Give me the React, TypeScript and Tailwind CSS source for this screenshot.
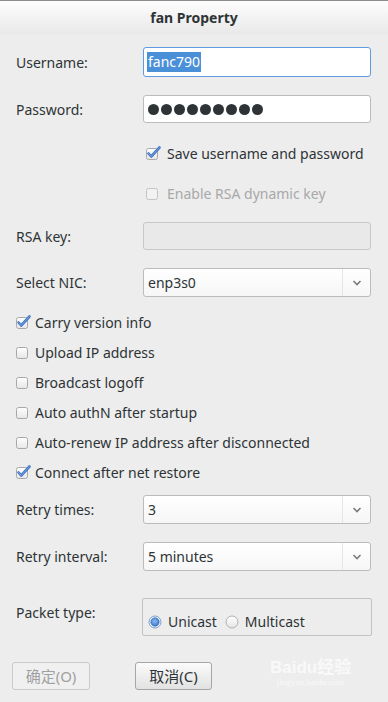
import React from 'react';

const font = { fontFamily: '"Noto Sans", "Noto Sans CJK SC", sans-serif' };

const CheckBox: React.FC<{ checked?: boolean; disabled?: boolean }> = ({ checked, disabled }) => (
  <svg width="16" height="16" viewBox="0 0 16 16" className="shrink-0">
    <defs>
      <linearGradient id="cbg" x1="0" y1="0" x2="0" y2="1">
        <stop offset="0" stopColor="#ffffff" />
        <stop offset="1" stopColor="#e6e6e6" />
      </linearGradient>
    </defs>
    <rect
      x="0.5"
      y="3.5"
      width="11"
      height="11"
      rx="2"
      fill={disabled ? '#f2f2f2' : 'url(#cbg)'}
      stroke={disabled ? '#c4c4c4' : '#a8a8a8'}
    />
    {checked && (
      <path
        d="M2.5 8.5 L5.2 11.5 L13.5 2.5"
        fill="none"
        stroke="#3b73c4"
        strokeWidth="2.6"
        strokeLinecap="round"
        strokeLinejoin="round"
      />
    )}
    {checked && (
      <path
        d="M2.5 8.5 L5.2 11.5 L13.5 2.5"
        fill="none"
        stroke="#8fb4e8"
        strokeWidth="0.8"
        strokeLinecap="round"
        strokeLinejoin="round"
      />
    )}
  </svg>
);

const Radio: React.FC<{ checked?: boolean }> = ({ checked }) => (
  <svg width="14" height="14" viewBox="0 0 14 14" className="shrink-0">
    <defs>
      <radialGradient id="rsel" cx="0.45" cy="0.4" r="0.6">
        <stop offset="0" stopColor="#8cbcf0" />
        <stop offset="1" stopColor="#3a78d0" />
      </radialGradient>
      <linearGradient id="roff" x1="0" y1="0" x2="0" y2="1">
        <stop offset="0" stopColor="#ffffff" />
        <stop offset="1" stopColor="#e4e4e4" />
      </linearGradient>
    </defs>
    <circle cx="7" cy="7" r="6" fill={checked ? '#f4f8fd' : 'url(#roff)'} stroke={checked ? '#7a9ecc' : '#b0b0b0'} />
    {checked && <circle cx="7" cy="7" r="4.2" fill="url(#rsel)" stroke="#2f62b0" strokeWidth="0.6" />}
  </svg>
);

const Chevron = () => (
  <svg width="10" height="6" viewBox="0 0 10 6">
    <path d="M1.5 1 L5 4.5 L8.5 1" fill="none" stroke="#7b7b7b" strokeWidth="1.6" />
  </svg>
);

const Combo: React.FC<{ value: string }> = ({ value }) => (
  <div className="flex h-[29px] w-[228px] rounded-[3px] border border-[#bcbcbc] bg-gradient-to-b from-[#ffffff] to-[#f6f6f6]">
    <div className="flex flex-1 items-center pl-[4px] text-[14px] text-[#2e3436]">{value}</div>
    <div className="flex w-[28px] items-center justify-center border-l border-[#e6e6e6]">
      <Chevron />
    </div>
  </div>
);

const Row: React.FC<{ label: string; labelClass?: string; children: React.ReactNode; className?: string }> = ({
  label,
  labelClass = 'items-center',
  children,
  className = '',
}) => (
  <div className={`flex ${className}`}>
    <div className={`flex w-[127px] text-[14px] text-[#2e3436] ${labelClass}`}>{label}</div>
    {children}
  </div>
);

const options = [
  { label: 'Carry version info', checked: true },
  { label: 'Upload IP address', checked: false },
  { label: 'Broadcast logoff', checked: false },
  { label: 'Auto authN after startup', checked: false },
  { label: 'Auto-renew IP address after disconnected', checked: false },
  { label: 'Connect after net restore', checked: true },
];

export default function App() {
  return (
    <div className="h-[702px] w-[388px] overflow-hidden bg-[#ededed]" style={font}>
      {/* Title bar */}
      <div className="flex h-[34px] items-center justify-center border-t border-[#8c8c8c] bg-gradient-to-b from-[#fdfdfd] to-[#e9e9e9]">
        <span className="text-[14px] font-bold text-[#2e3436]">fan Property</span>
      </div>

      <div className="flex flex-col pl-[16px] pt-[13px]">
        <Row label="Username:">
          <div className="flex h-[30px] w-[228px] items-center rounded-[3px] border border-[#5f9be0] bg-white pl-[3px]">
            <span className="bg-[#4a90d9] px-[1px] text-[14px] leading-[20px] text-white">fanc790</span>
          </div>
        </Row>

        <Row label="Password:" className="mt-[18px]">
          <div className="flex h-[28px] w-[228px] items-center gap-[2px] rounded-[3px] border border-[#bcbcbc] bg-white pl-[4px]">
            {Array.from({ length: 9 }).map((_, i) => (
              <span key={i} className="h-[11px] w-[11px] rounded-full bg-[#2e3436]" />
            ))}
          </div>
        </Row>

        <div className="mt-[20px] flex h-[20px] items-center gap-[5px] pl-[130px]">
          <CheckBox checked />
          <span className="text-[14px] text-[#2e3436]">Save username and password</span>
        </div>

        <div className="mt-[20px] flex h-[20px] items-center gap-[5px] pl-[130px]">
          <CheckBox disabled />
          <span className="text-[14px] text-[#a8a8a8]">Enable RSA dynamic key</span>
        </div>

        <Row label="RSA key:" className="mt-[19px]">
          <div className="h-[28px] w-[228px] rounded-[3px] border border-[#c8c8c8] bg-[#e9e9e9]" />
        </Row>

        <Row label="Select NIC:" className="mt-[18px]">
          <Combo value="enp3s0" />
        </Row>

        <div className="mt-[10px] flex flex-col">
          {options.map((o) => (
            <div key={o.label} className="flex h-[30px] items-center gap-[3px]">
              <CheckBox checked={o.checked} />
              <span className="text-[14px] text-[#2e3436]">{o.label}</span>
            </div>
          ))}
        </div>

        <Row label="Retry times:" className="mt-[8px]">
          <Combo value="3" />
        </Row>

        <Row label="Retry interval:" className="mt-[18px]">
          <Combo value="5 minutes" />
        </Row>

        <Row label="Packet type:" labelClass="items-start pt-[4px]" className="mt-[27px]">
          <div className="flex h-[38px] w-[230px] -ml-[1px] items-end gap-[8px] rounded-[2px] border border-[#c2c2c2] pb-[3px] pl-[5px]">
            <div className="flex items-center gap-[6px]">
              <Radio checked />
              <span className="text-[14px] text-[#2e3436]">Unicast</span>
            </div>
            <div className="flex items-center gap-[6px]">
              <Radio />
              <span className="text-[14px] text-[#2e3436]">Multicast</span>
            </div>
          </div>
        </Row>

        <div className="mt-[26px] flex items-center -ml-[4px]">
          <button className="flex h-[28px] w-[78px] items-center justify-center rounded-[3px] border border-[#cacaca] bg-[#f0f0f0] text-[15px] text-[#a0a0a0]">
            确定(O)
          </button>
          <button className="ml-[45px] flex h-[28px] w-[77px] items-center justify-center rounded-[3px] border border-[#a6a6a6] bg-gradient-to-b from-[#fbfbfb] to-[#e2e2e2] text-[15px] text-[#2e3436]">
            取消(C)
          </button>
          <div className="ml-[58px] -mt-[6px] flex flex-col items-center leading-none text-[#f9f9f9]">
            <span className="text-[17px] font-bold" style={{ fontFamily: '"Liberation Sans", "Noto Sans CJK SC", sans-serif' }}>
              Baidu经验
            </span>
            <span className="mt-[2px] text-[9px]" style={{ fontFamily: '"Liberation Serif", serif' }}>
              jingyan.baidu.com
            </span>
          </div>
        </div>
      </div>
    </div>
  );
}
